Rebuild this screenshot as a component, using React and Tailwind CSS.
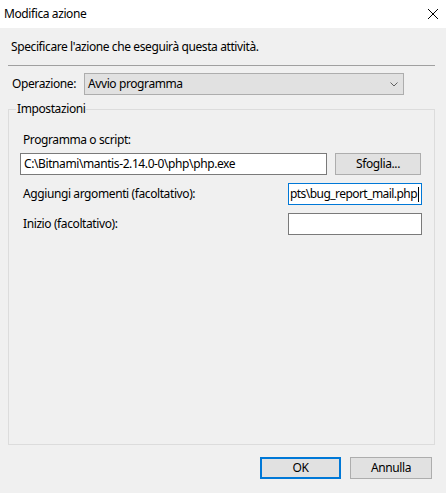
import React from 'react';

const TextBox = ({ value, focused, className = '' }) => (
  <div
    className={`h-[22px] bg-white border flex items-center overflow-hidden ${
      focused ? 'border-[#0078d7] pl-[1px] tracking-[-0.55px]' : 'border-[#7a7a7a] pl-[3px]'
    } ${className}`}
  >
    <span className="whitespace-nowrap">{value}</span>
    {focused && <span className="ml-px w-px h-[15px] bg-black shrink-0" />}
  </div>
);

const Button = ({ children, isDefault, className = '' }) => (
  <button
    className={`bg-[#e1e1e1] flex items-center justify-center ${
      isDefault ? 'border-2 border-[#0078d7]' : 'border border-[#adadad]'
    } ${className}`}
  >
    {children}
  </button>
);

export default function App() {
  return (
    <div className="w-[446px] h-[493px] flex flex-col bg-[#f0f0f0] text-black text-[12px] leading-[16px] tracking-[-0.4px] font-['Segoe_UI','Noto_Sans',sans-serif]">
      {/* title bar */}
      <div className="h-[28px] bg-white flex items-center justify-between pl-[4px] pr-[8px] shrink-0">
        <span>Modifica azione</span>
        <svg width="10" height="10" viewBox="0 0 10 10" className="text-black">
          <path d="M0 0 L10 10 M10 0 L0 10" stroke="currentColor" strokeWidth="1" />
        </svg>
      </div>

      <div className="flex flex-col">
        <p className="mt-[11px] pl-[11px]">Specificare l'azione che eseguirà questa attività.</p>

        <div className="mt-[10px] ml-[8px] w-[427px] h-px bg-[#a0a0a0]" />

        <div className="mt-[7px] flex items-center">
          <span className="pl-[12px] w-[84px]">Operazione:</span>
          <div className="w-[320px] h-[22px] bg-[#e1e1e1] border border-[#adadad] flex items-center justify-between pl-[3px] pr-[5px]">
            <span>Avvio programma</span>
            <svg width="8" height="5" viewBox="0 0 8 5">
              <path d="M0.5 0.5 L4 4 L7.5 0.5" fill="none" stroke="#606060" strokeWidth="1" />
            </svg>
          </div>
        </div>

        {/* group box */}
        <div className="relative mt-[14px] ml-[8px] w-[427px] h-[336px] border border-[#dcdcdc] pt-[22px] pl-[11px]">
          <span className="absolute left-[7px] top-[-9px] px-[1px] bg-[#f0f0f0]">Impostazioni</span>

          <div className="pl-[3px]">Programma o script:</div>
          <div className="mt-[5px] flex items-center">
            <TextBox value="C:\Bitnami\mantis-2.14.0-0\php\php.exe" className="w-[307px]" />
            <Button className="ml-[8px] w-[86px] h-[22px]">Sfoglia...</Button>
          </div>

          <div className="mt-[8px] flex items-center">
            <span className="pl-[3px] w-[268px]">Aggiungi argomenti (facoltativo):</span>
            <TextBox value="pts\bug_report_mail.php" focused className="w-[134px]" />
          </div>

          <div className="mt-[8px] flex items-center">
            <span className="pl-[3px] w-[268px]">Inizio (facoltativo):</span>
            <TextBox value="" className="w-[134px]" />
          </div>
        </div>

        <div className="mt-[12px] flex justify-end pr-[14px] gap-[9px]">
          <Button isDefault className="w-[81px] h-[22px]">OK</Button>
          <Button className="w-[82px] h-[22px]">Annulla</Button>
        </div>
      </div>
    </div>
  );
}
